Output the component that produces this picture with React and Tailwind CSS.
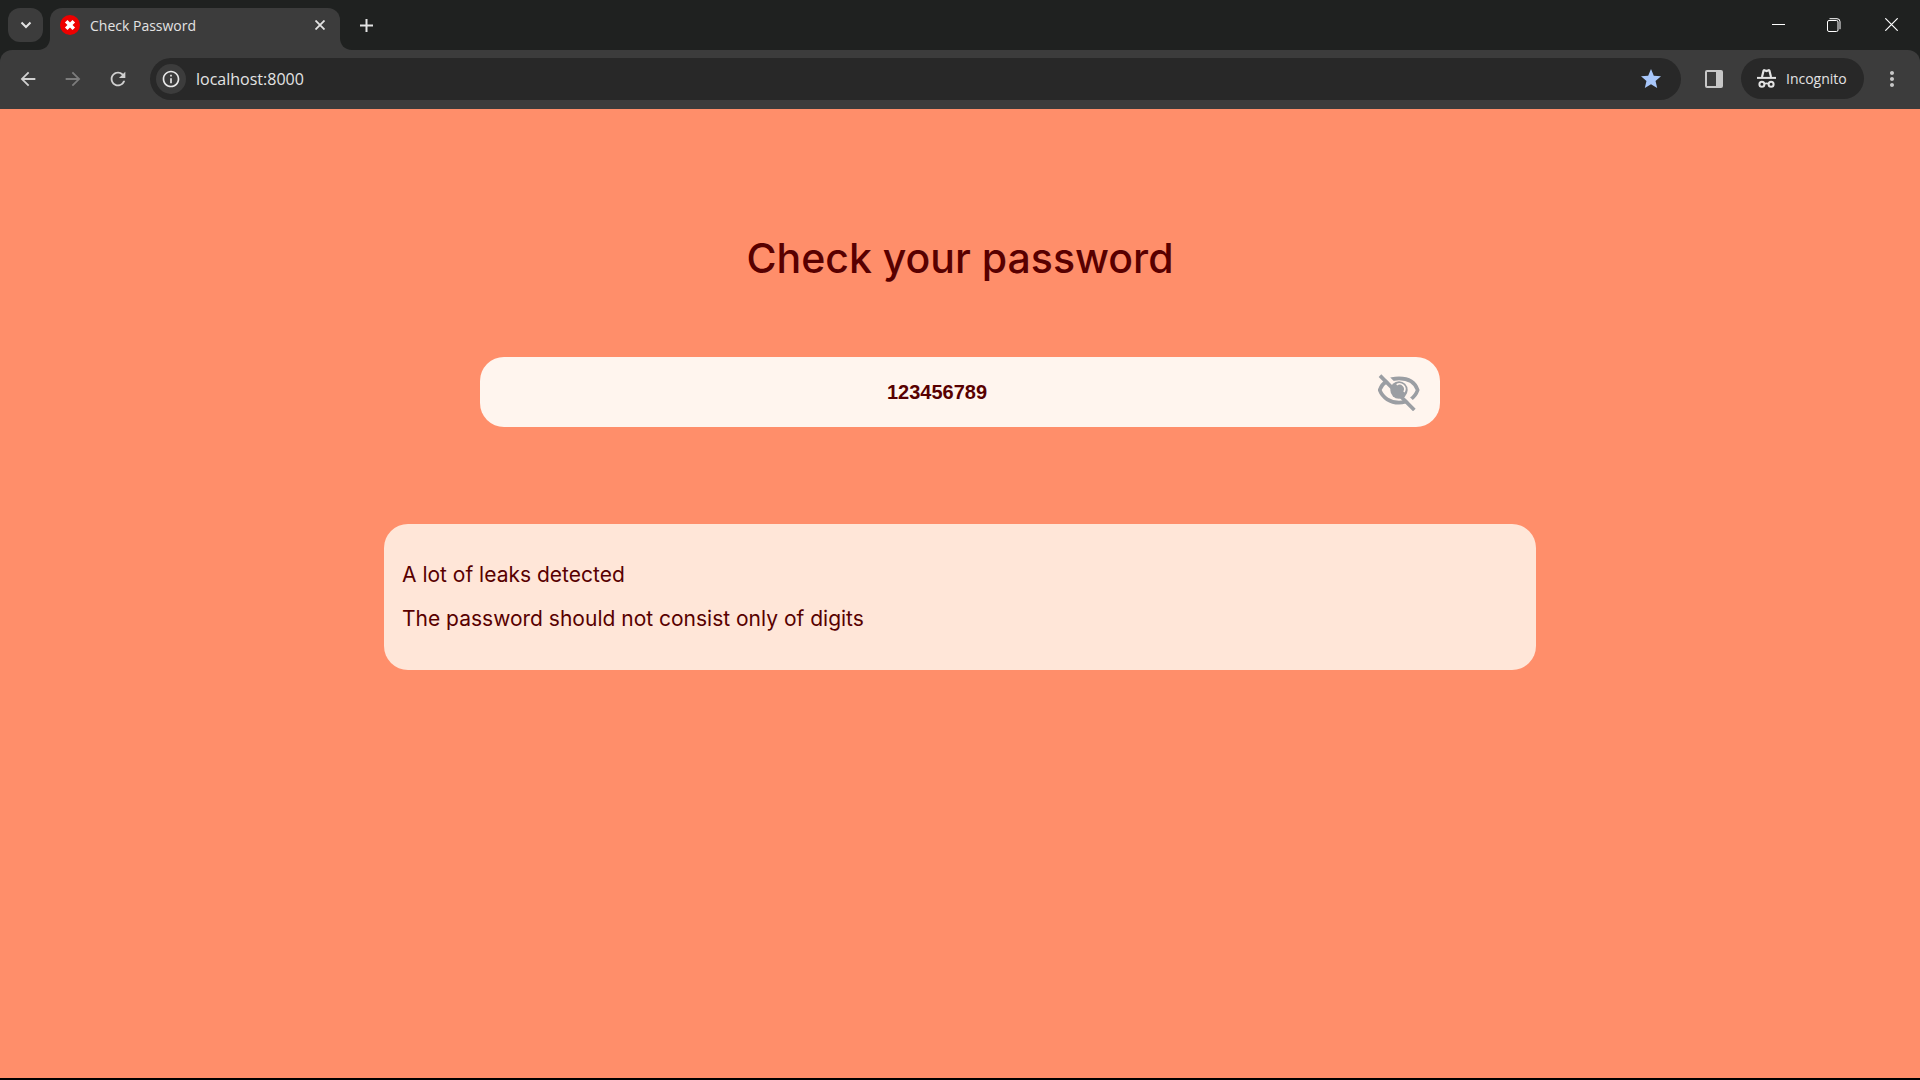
import { MdArrowBack, MdArrowForward, MdRefresh, MdStar, MdInfoOutline, MdMoreVert } from "react-icons/md";

const messages = ["A lot of leaks detected", "The password should not consist only of digits"];

function Foot({ flip }) {
  return (
    <svg aria-hidden="true" className={flip ? "h-3 w-3 self-end -scale-x-100" : "h-3 w-3 self-end"} viewBox="0 0 12 12" fill="#3c3c3c">
      <path d="M12 0v12H0C7 12 12 7 12 0z" />
    </svg>
  );
}

function TitleBar() {
  return (
    <header className="flex h-[50px] items-stretch bg-[#1f2120]">
      <button aria-label="Search tabs" className="mt-2 ml-2 flex h-[34px] w-[35px] shrink-0 items-center justify-center rounded-xl bg-[#3c3c3c]">
        <svg width="12" height="8" viewBox="0 0 12 8" fill="none" stroke="#e3e3e3" strokeWidth="2"><path d="M1.500 1.500 6 6l4.500-4.500" /></svg>
      </button>
      <div className="-ml-[5px] flex pt-2">
        <Foot />
        <div className="flex w-[290px] items-center rounded-t-xl bg-[#3c3c3c] pr-3 pb-2 pl-2.5">
          <svg width="20" height="20" viewBox="0 0 20 20" aria-hidden="true">
            <circle cx="10" cy="10" r="10" fill="#ee0000" />
            <path d="M6.200 6.200l7.600 7.600M13.800 6.200l-7.600 7.600" stroke="#fff" strokeWidth="3.600" />
          </svg>
          <span className="ml-2.5 flex-1 pt-0.5 text-sm text-[#e3e3e3]">Check Password</span>
          <button aria-label="Close tab" className="flex h-4 w-4 items-center justify-center">
            <svg width="10" height="10" viewBox="0 0 10 10" stroke="#e3e3e3" strokeWidth="1.800"><path d="M.5.5l9 9M9.500.5l-9 9" /></svg>
          </button>
        </div>
        <Foot flip />
      </div>
      <button aria-label="New tab" className="flex h-[50px] w-7 items-center justify-center">
        <svg width="13" height="13" viewBox="0 0 13 13" stroke="#e3e3e3" strokeWidth="2"><path d="M6.500 0v13M0 6.500h13" /></svg>
      </button>
      <div className="ml-auto flex h-[49px]">
        <button aria-label="Minimize" className="flex w-14 items-center justify-center">
          <svg width="13" height="13" viewBox="0 0 13 13"><path d="M0 6h13v1H0z" fill="#fff" /></svg>
        </button>
        <button aria-label="Restore" className="flex w-14 items-center justify-center">
          <svg width="14" height="14" viewBox="0 0 14 14" fill="none" stroke="#fff"><rect x=".5" y="2.500" width="10.500" height="11" rx="1.500" /><path d="M2.500 .7h7.500a3 3 0 0 1 3 3v7.500" /></svg>
        </button>
        <button aria-label="Close window" className="flex w-[58px] items-center justify-center">
          <svg width="13" height="13" viewBox="0 0 13 13" stroke="#fff" strokeWidth="1.200"><path d="M.3.3l12.400 12.400M12.700.3.3 12.700" /></svg>
        </button>
      </div>
    </header>
  );
}

function Toolbar() {
  return (
    <div className="bg-[#1f2120]">
      <nav className="flex h-[59px] items-center rounded-t-xl bg-[#3c3c3c] pb-0.5 pl-[17px]">
        <button aria-label="Back" className="mr-[23px]"><MdArrowBack size={22} color="#d0d0d0" /></button>
        <button aria-label="Forward" className="mr-[23px]"><MdArrowForward size={22} color="#7c7c7c" /></button>
        <button aria-label="Reload"><MdRefresh size={22} color="#d0d0d0" /></button>
        <div className="ml-[21px] flex h-[42px] flex-1 items-center rounded-full bg-[#282828] pr-[18px] pl-1.5">
          <button aria-label="Site information" className="flex h-[30px] w-[30px] items-center justify-center rounded-full bg-[#3c3c3c]">
            <MdInfoOutline size={20} color="#e8e8e8" />
          </button>
          <input aria-label="Address" defaultValue="localhost:8000" className="ml-2.5 min-w-0 flex-1 bg-transparent text-base text-[#e3e3e3] outline-none" />
          <button aria-label="Bookmark"><MdStar size={24} color="#a8c7fa" /></button>
        </div>
        <button aria-label="Side panel" className="ml-6">
          <svg width="18" height="18" viewBox="0 0 18 18"><rect x="1" y="1" width="16" height="16" rx="1" fill="none" stroke="#c7c7c7" strokeWidth="2" /><path d="M11 1h6v16h-6z" fill="#c7c7c7" /></svg>
        </button>
        <button className="ml-[18px] flex h-[41px] w-[123px] items-center rounded-full bg-[#282828] pl-4 text-sm text-[#e3e3e3]">
          <svg className="mr-2.5" width="19" height="19" viewBox="0 0 19 19" fill="none" stroke="#e3e3e3">
            <path d="M5 8 6.600 1.600Q6.800.9 7.500 1.200l2 .8 2-.8q.7-.3.9.4L14 8" strokeWidth="2.200" />
            <path d="M0 8.900h19" strokeWidth="2" />
            <circle cx="4.900" cy="15.300" r="2.500" strokeWidth="2" /><circle cx="14.100" cy="15.300" r="2.500" strokeWidth="2" />
            <path d="M7.300 14.800q2.200-1 4.400 0" strokeWidth="1.700" />
          </svg>
          Incognito
        </button>
        <button aria-label="Menu" className="mr-4 ml-4"><MdMoreVert size={24} color="#c7c7c7" /></button>
      </nav>
    </div>
  );
}

function EyeOff() {
  return (
    <svg width="42" height="38" viewBox="24 24 126 114" fill="none">
      <path d="M29 75C38 50 60 40 87 40s48 11 56 35c-8 24-30 38-56 38S38 99 29 75z" stroke="#9b9ea3" strokeWidth="11" />
      <path d="M36 22 146 132" stroke="#fff5ee" strokeWidth="13" />
      <circle cx="87" cy="75" r="26" fill="#9b9ea3" />
      <path d="M80 59a16 16 0 0 1 22 22" stroke="#fff5ee" strokeWidth="5" />
      <path d="M30 32 133 135" stroke="#9b9ea3" strokeWidth="11" />
    </svg>
  );
}

export default function App() {
  return (
    <div className="flex min-h-screen flex-col border-b-2 border-black bg-[#ff8e6a] font-['Open_Sans','Noto_Sans',sans-serif]">
      <TitleBar />
      <Toolbar />
      <main className="flex flex-1 flex-col items-center font-['Inter',sans-serif] text-[#580000]">
        <h1 className="mt-[123px] text-[41px] leading-[52px] font-medium">Check your password</h1>
        <div className="mt-[73px] flex h-[70px] w-1/2 items-center rounded-3xl bg-[#fff5ee] pr-5">
          <input aria-label="Password" defaultValue="123456789" className="h-full min-w-0 flex-1 bg-transparent pl-4 text-center font-['Liberation_Sans',sans-serif] text-xl font-bold outline-none" />
          <button aria-label="Hide password"><EyeOff /></button>
        </div>
        <section className="mt-[97px] w-3/5 rounded-3xl bg-[#ffe6d8] px-[18px] py-[29px] text-[21px] leading-[44px]">
          {messages.map((m) => <p key={m}>{m}</p>)}
        </section>
      </main>
    </div>
  );
}
